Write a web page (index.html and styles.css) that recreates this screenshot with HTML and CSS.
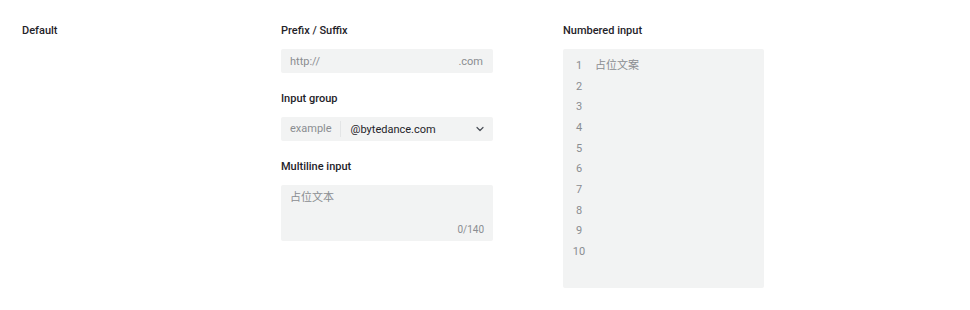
FILE: index.html
```html
<!DOCTYPE html>
<html lang="en">
  <head>
    <meta charset="UTF-8" />
    <meta name="viewport" content="width=device-width, initial-scale=1.0" />
    <title>Input</title>
    <link rel="stylesheet" href="styles.css">
  </head>
  <body>
    <div class="demo">
      <div class="col col-default">
        <div class="title">Default</div>
      </div>

      <div class="col col-mid">
        <div class="title">Prefix / Suffix</div>
        <div class="field">
          <span class="muted">http://</span>
          <span class="muted">.com</span>
        </div>

        <div class="title">Input group</div>
        <div class="field group">
          <span class="addon">example</span>
          <span class="value">@bytedance.com</span>
          <svg class="chevron" width="12" height="12" viewBox="0 0 12 12">
            <path d="M3 4.5 L6 7.5 L9 4.5" fill="none" stroke="#4a4f57" stroke-width="1.2" stroke-linecap="round" stroke-linejoin="round" />
          </svg>
        </div>

        <div class="title">Multiline input</div>
        <div class="field textarea">
          <span class="muted">占位文本</span>
          <span class="count">0/140</span>
        </div>
      </div>

      <div class="col col-num">
        <div class="title">Numbered input</div>
        <div class="numbered">
          <div class="line"><span class="num">1</span><span class="muted">占位文案</span></div>
          <div class="line"><span class="num">2</span></div>
          <div class="line"><span class="num">3</span></div>
          <div class="line"><span class="num">4</span></div>
          <div class="line"><span class="num">5</span></div>
          <div class="line"><span class="num">6</span></div>
          <div class="line"><span class="num">7</span></div>
          <div class="line"><span class="num">8</span></div>
          <div class="line"><span class="num">9</span></div>
          <div class="line"><span class="num">10</span></div>
        </div>
      </div>
    </div>
  </body>
</html>
```

FILE: styles.css
```css
body {
  margin: 0;
  padding: 0;
  background-color: #fff;
  font-family: Roboto, "Noto Sans CJK SC", sans-serif;
  font-size: 11px;
  color: #1f2329;
}
.demo {
  display: grid;
  grid-template-columns: 259px 282px 201px;
  padding: 22px 0 0 22px;
}
.col {
  display: flex;
  flex-direction: column;
}
.col-mid {
  width: 212px;
}
.title {
  font-size: 11px;
  font-weight: 500;
  line-height: 16px;
  padding-top: 1px;
  margin-bottom: 10px;
  color: #1f2329;
}
.field + .title {
  margin-top: 17px;
}
.field {
  display: flex;
  align-items: center;
  justify-content: space-between;
  height: 24px;
  padding: 0 10px 0 9px;
  background-color: #f2f3f3;
  border-radius: 2px;
}
.muted {
  color: #8a8d91;
}
.group {
  justify-content: flex-start;
  padding-right: 7px;
}
.addon {
  color: #8a8d91;
  padding-right: 8px;
  border-right: 1px solid #e3e5e6;
  line-height: 16px;
}
.value {
  flex: 1;
  padding-left: 10px;
  color: #1f2329;
}
.textarea {
  height: 56px;
  flex-direction: column;
  align-items: stretch;
  justify-content: space-between;
  padding: 5px 9px 3px 9px;
  box-sizing: border-box;
  line-height: 16px;
}
.count {
  align-self: flex-end;
  font-size: 10px;
  color: #8a8d91;
}
.numbered {
  height: 239px;
  box-sizing: border-box;
  padding: 7px 0 0 0;
  background-color: #f2f3f3;
  border-radius: 2px;
}
.line {
  display: flex;
  line-height: 20.67px;
}
.num {
  width: 32px;
  text-align: center;
  color: #8a8d91;
}
```
